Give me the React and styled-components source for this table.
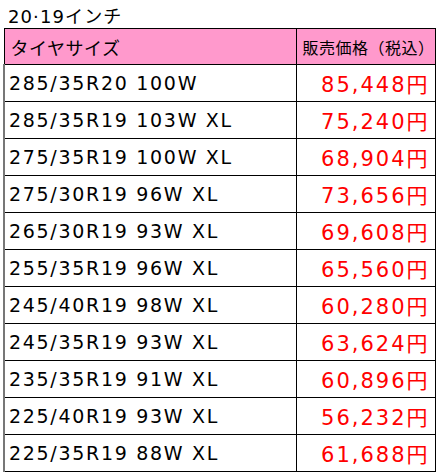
import React from "react";
import styled, { createGlobalStyle } from "styled-components";

const Global = createGlobalStyle`
  html, body { margin: 0; padding: 0; background: #fff; }
  body { font-family: "DejaVu Sans", "Noto Sans CJK JP", sans-serif; color: #000; }
`;

const Page = styled.div`
  width: 439px;
  height: 476px;
  overflow: hidden;
  background: #fff;
`;

const Title = styled.div`
  height: 28px;
  padding: 6px 0 0 8px;
  box-sizing: border-box;
  font-size: 18px;
  line-height: 21px;
  letter-spacing: 1.1px;
`;

const Table = styled.table`
  margin-left: 3px;
  width: 431px;
  border-collapse: collapse;
  table-layout: fixed;
`;

const HeadCell = styled.th`
  background: #ff99cc;
  border: 1px solid #000;
  height: 36px;
  padding: 0 0 0 6px;
  font-weight: normal;
  text-align: left;
  font-size: ${(p) => (p.$small ? "16px" : "18px")};
  letter-spacing: 0.5px;
  width: ${(p) => p.$w}px;
  box-sizing: border-box;
`;

const Cell = styled.td`
  border: 1px solid #000;
  border-left: ${(p) => (p.$first ? "2px solid #777" : "1px solid #000")};
  height: 37px;
  padding: ${(p) => (p.$price ? "0 5px 0 0" : "0 0 0 4px")};
  text-align: ${(p) => (p.$price ? "right" : "left")};
  color: ${(p) => (p.$price ? "#ff0000" : "#000")};
  font-size: ${(p) => (p.$price ? "21px" : "19px")};
  letter-spacing: ${(p) => (p.$price ? "2px" : "1.7px")};
  white-space: nowrap;
  box-sizing: border-box;
`;

const rows = [
  ["285/35R20 100W", "85,448円"],
  ["285/35R19 103W XL", "75,240円"],
  ["275/35R19 100W XL", "68,904円"],
  ["275/30R19 96W XL", "73,656円"],
  ["265/30R19 93W XL", "69,608円"],
  ["255/35R19 96W XL", "65,560円"],
  ["245/40R19 98W XL", "60,280円"],
  ["245/35R19 93W XL", "63,624円"],
  ["235/35R19 91W XL", "60,896円"],
  ["225/40R19 93W XL", "56,232円"],
  ["225/35R19 88W XL", "61,688円"],
];

export default function App() {
  return (
    <Page>
      <Global />
      <Title>20·19インチ</Title>
      <Table>
        <thead>
          <tr>
            <HeadCell $w={292}>タイヤサイズ</HeadCell>
            <HeadCell $w={139} $small>販売価格（税込）</HeadCell>
          </tr>
        </thead>
        <tbody>
          {rows.map(([size, price]) => (
            <tr key={size}>
              <Cell $first>{size}</Cell>
              <Cell $price>{price}</Cell>
            </tr>
          ))}
        </tbody>
      </Table>
    </Page>
  );
}
